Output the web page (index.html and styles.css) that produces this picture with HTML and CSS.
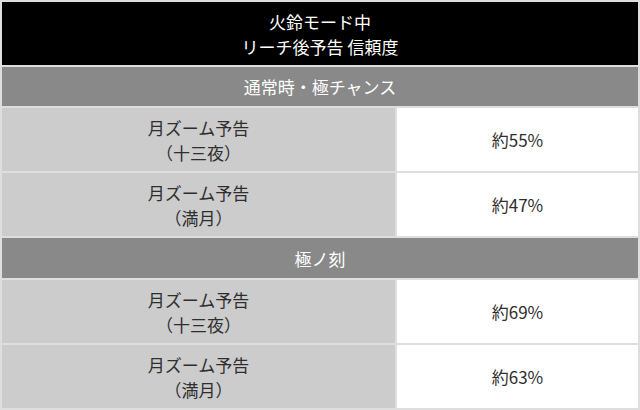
FILE: index.html
```html
<!DOCTYPE html>
<html lang="ja">
<head>
<meta charset="utf-8">
<link rel="stylesheet" href="styles.css">
</head>
<body>
<div class="table">
  <div class="cell title">火鈴モード中<br>リーチ後予告 信頼度</div>
  <div class="cell section s1">通常時・極チャンス</div>
  <div class="cell label">月ズーム予告<br>（十三夜）</div>
  <div class="cell value">約55%</div>
  <div class="cell label">月ズーム予告<br>（満月）</div>
  <div class="cell value">約47%</div>
  <div class="cell section s2">極ノ刻</div>
  <div class="cell label">月ズーム予告<br>（十三夜）</div>
  <div class="cell value">約69%</div>
  <div class="cell label">月ズーム予告<br>（満月）</div>
  <div class="cell value">約63%</div>
</div>
</body>
</html>
```
FILE: styles.css
```css
html, body {
  margin: 0;
  padding: 0;
  background: #ffffff;
}
.table {
  width: 640px;
  height: 410px;
  box-sizing: border-box;
  padding: 2px;
  background: #dedede;
  display: grid;
  grid-template-columns: 393px 1fr;
  grid-template-rows: 63px 39px 63px 63px 40px 63px 63px;
  gap: 2px;
  font-family: "Noto Sans CJK JP", "Noto Sans", sans-serif;
  font-size: 17px;
  line-height: 25px;
  color: #2e2e2e;
}
.cell {
  display: flex;
  align-items: center;
  justify-content: center;
  text-align: center;
}
.title {
  grid-column: 1 / 3;
  background: #000000;
  color: #ffffff;
}
.section {
  grid-column: 1 / 3;
  background: #898989;
  color: #ffffff;
}
.label {
  background: #cccccc;
}
.value {
  background: #ffffff;
}
```
